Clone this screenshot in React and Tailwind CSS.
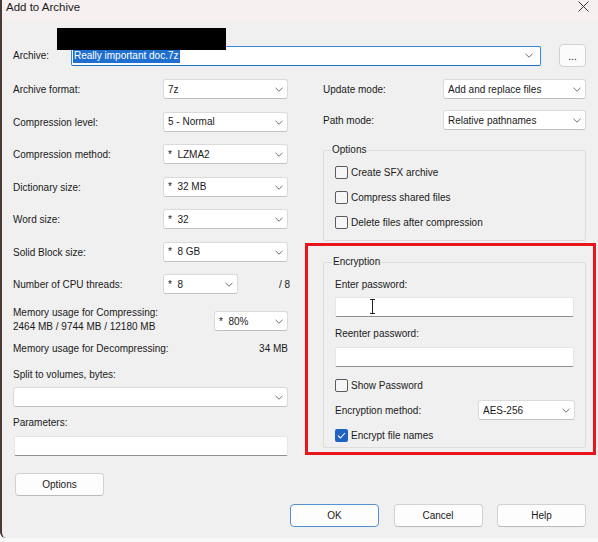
import React from 'react'

function Chevron() {
  return (
    <svg width="8" height="5" viewBox="0 0 8 5" className="shrink-0">
      <path d="M0.5 0.8 L4 4.2 L7.5 0.8" fill="none" stroke="#606060" strokeWidth="0.9" />
    </svg>
  )
}

function Select({ value, className = '' }) {
  return (
    <div
      className={`h-[20px] bg-white border border-[#dadada] border-b-[#c2c2c2] rounded-[3px] flex items-center justify-between pl-[4px] pr-[4px] pt-[1px] whitespace-pre ${className}`}
    >
      <span>{value}</span>
      <Chevron />
    </div>
  )
}

function Row({ label, children }) {
  return (
    <div className="flex items-center justify-between h-[20px]">
      <span className="pt-[2px]">{label}</span>
      {children}
    </div>
  )
}

function Check({ label, checked = false, className = '' }) {
  return (
    <div className={`flex items-center h-[16px] gap-[3px] ${className}`}>
      {checked ? (
        <span className="w-[13px] h-[13px] rounded-[2px] bg-[#1f62c4] flex items-center justify-center">
          <svg width="9" height="7" viewBox="0 0 9 7">
            <path d="M1 3.6 L3.4 6 L8 1" fill="none" stroke="white" strokeWidth="1.1" />
          </svg>
        </span>
      ) : (
        <span className="w-[13px] h-[13px] rounded-[2px] border border-[#5c5c5c] bg-[#f6f6f6]" />
      )}
      <span className="pt-[1px]">{label}</span>
    </div>
  )
}

function TextBox({ className = '', children }) {
  return (
    <div
      className={`relative h-[20px] bg-white border border-[#e6e6e6] border-b-[#8e8e8e] rounded-[2px] ${className}`}
    >
      {children}
    </div>
  )
}

function Button({ label, primary = false, className = '' }) {
  return (
    <div
      className={`h-[23px] w-[89px] bg-[#fdfdfd] rounded-[4px] flex items-center justify-center pt-[1px] ${
        primary ? 'border-[1.5px] border-[#5591d2]' : 'border border-[#d2d2d2] border-b-[#bcbcbc]'
      } ${className}`}
    >
      {label}
    </div>
  )
}

export default function App() {
  return (
    <div className="relative w-[598px] h-[542px] overflow-hidden bg-[#f8f8f8] text-[10px] leading-[14px] text-[#1a1a1a] font-['Liberation_Sans',Arial,sans-serif]">
      <div className="w-[598px] h-[538px] bg-[#f0f0f0] border-l-2 border-[#4a3934] rounded-bl-[6px] flex flex-col">
        {/* title bar */}
        <div className="h-[22px] bg-[#f6f0f0] flex items-start justify-between pl-[4px] pr-[9px]">
          <span className="text-[11.5px] leading-[14px]">Add to Archive</span>
          <svg width="11" height="11" viewBox="0 0 11 11" className="mt-[1px]">
            <path d="M0.5 0.5 L10.5 10.5 M10.5 0.5 L0.5 10.5" stroke="#333" strokeWidth="1" />
          </svg>
        </div>

        {/* archive row */}
        <div className="flex items-center h-[23px] mt-[22px] pl-[11px]">
          <span className="w-[58px] pt-[1px]">Archive:</span>
          <div className="w-[470px] h-[20px] bg-white border border-[#3a86d8] border-b-[#1c6cc8] rounded-[2px] flex items-center justify-between pl-[1px] pr-[7px]">
            <span className="bg-[#1f6fd0] text-white px-[1px] leading-[14px]">Really important doc.7z</span>
            <Chevron />
          </div>
          <div className="ml-[18px] w-[27px] h-[23px] bg-[#fbfbfb] border border-[#d2d2d2] rounded-[4px] flex items-center justify-center pt-[3px]">
            ...
          </div>
        </div>

        {/* main columns */}
        <div className="flex mt-[12px] pl-[11px]">
          {/* left column */}
          <div className="w-[275px] flex flex-col">
            <div className="flex flex-col gap-[12.5px]">
              <Row label="Archive format:">
                <Select value="7z" className="w-[125px]" />
              </Row>
              <Row label="Compression level:">
                <Select value="5 - Normal" className="w-[125px]" />
              </Row>
              <Row label="Compression method:">
                <Select value="*  LZMA2" className="w-[125px]" />
              </Row>
              <Row label="Dictionary size:">
                <Select value="*  32 MB" className="w-[125px]" />
              </Row>
              <Row label="Word size:">
                <Select value="*  32" className="w-[125px]" />
              </Row>
              <Row label="Solid Block size:">
                <Select value="*  8 GB" className="w-[125px]" />
              </Row>
              <div className="flex items-center h-[20px]">
                <span className="w-[150px] pt-[2px]">Number of CPU threads:</span>
                <Select value="*  8" className="w-[75px]" />
                <span className="flex-1 text-right mr-[-2px] pt-[2px]">/ 8</span>
              </div>
            </div>

            <div className="flex justify-between items-start mt-[12px]">
              <div className="flex flex-col">
                <span>Memory usage for Compressing:</span>
                <span>2464 MB / 9744 MB / 12180 MB</span>
              </div>
              <Select value="*  80%" className="w-[74px] mt-[5px]" />
            </div>

            <div className="flex justify-between mt-[8px]">
              <span>Memory usage for Decompressing:</span>
              <span>34 MB</span>
            </div>

            <span className="mt-[12px]">Split to volumes, bytes:</span>
            <Select value="" className="w-[275px] mt-[5px]" />

            <span className="mt-[9px]">Parameters:</span>
            <TextBox className="w-[274px] ml-[1px] mt-[6px]" />

            <Button label="Options" className="ml-[2px] mt-[17px]" />
          </div>

          {/* right column */}
          <div className="w-[263px] ml-[35px] flex flex-col">
            <Row label="Update mode:">
              <Select value="Add and replace files" className="w-[143px] h-[19px]" />
            </Row>
            <div className="mt-[11px]">
              <Row label="Path mode:">
                <Select value="Relative pathnames" className="w-[143px] h-[19px]" />
              </Row>
            </div>

            <fieldset className="mt-[13px] border border-[#dcdcdc] rounded-[2px] pl-[11px] pr-[11px] pb-[10px]">
              <legend className="ml-[-4px] px-[1px] leading-[14px]">Options</legend>
              <div className="flex flex-col gap-[9px] mt-[7px]">
                <Check label="Create SFX archive" />
                <Check label="Compress shared files" />
                <Check label="Delete files after compression" />
              </div>
            </fieldset>

            <fieldset className="mt-[14px] border border-[#dcdcdc] rounded-[2px] pl-[11px] pr-[11px] pb-[4px] flex flex-col">
              <legend className="ml-[-3px] px-[1px] leading-[14px]">Encryption</legend>
              <span className="mt-[9px]">Enter password:</span>
              <TextBox className="mt-[5px]">
                <svg width="7" height="15" viewBox="0 0 7 15" className="absolute left-[33px] top-[1px]">
                  <path d="M1 0.5 H6 M1 14.5 H6 M3.5 0.5 V14.5" fill="none" stroke="#222" strokeWidth="1" />
                </svg>
              </TextBox>
              <span className="mt-[10px]">Reenter password:</span>
              <TextBox className="mt-[6px]" />
              <Check label="Show Password" className="mt-[10px]" />
              <div className="flex items-center justify-between h-[20px] mt-[7px]">
                <span className="pt-[1px]">Encryption method:</span>
                <Select value="AES-256" className="w-[97px] mr-[-1px]" />
              </div>
              <Check label="Encrypt file names" checked className="mt-[7px]" />
            </fieldset>
          </div>
        </div>

        {/* bottom buttons */}
        <div className="flex justify-end gap-[14.5px] mt-[8px] pr-[12px]">
          <Button label="OK" primary />
          <Button label="Cancel" />
          <Button label="Help" />
        </div>
      </div>

      {/* redaction */}
      <div className="absolute left-[57px] top-[28px] w-[169px] h-[22px] bg-black" />

      {/* highlight annotation */}
      <div className="absolute left-[305px] top-[243px] w-[291px] h-[212px] border-[3px] border-[#e8151d]" />
    </div>
  )
}
